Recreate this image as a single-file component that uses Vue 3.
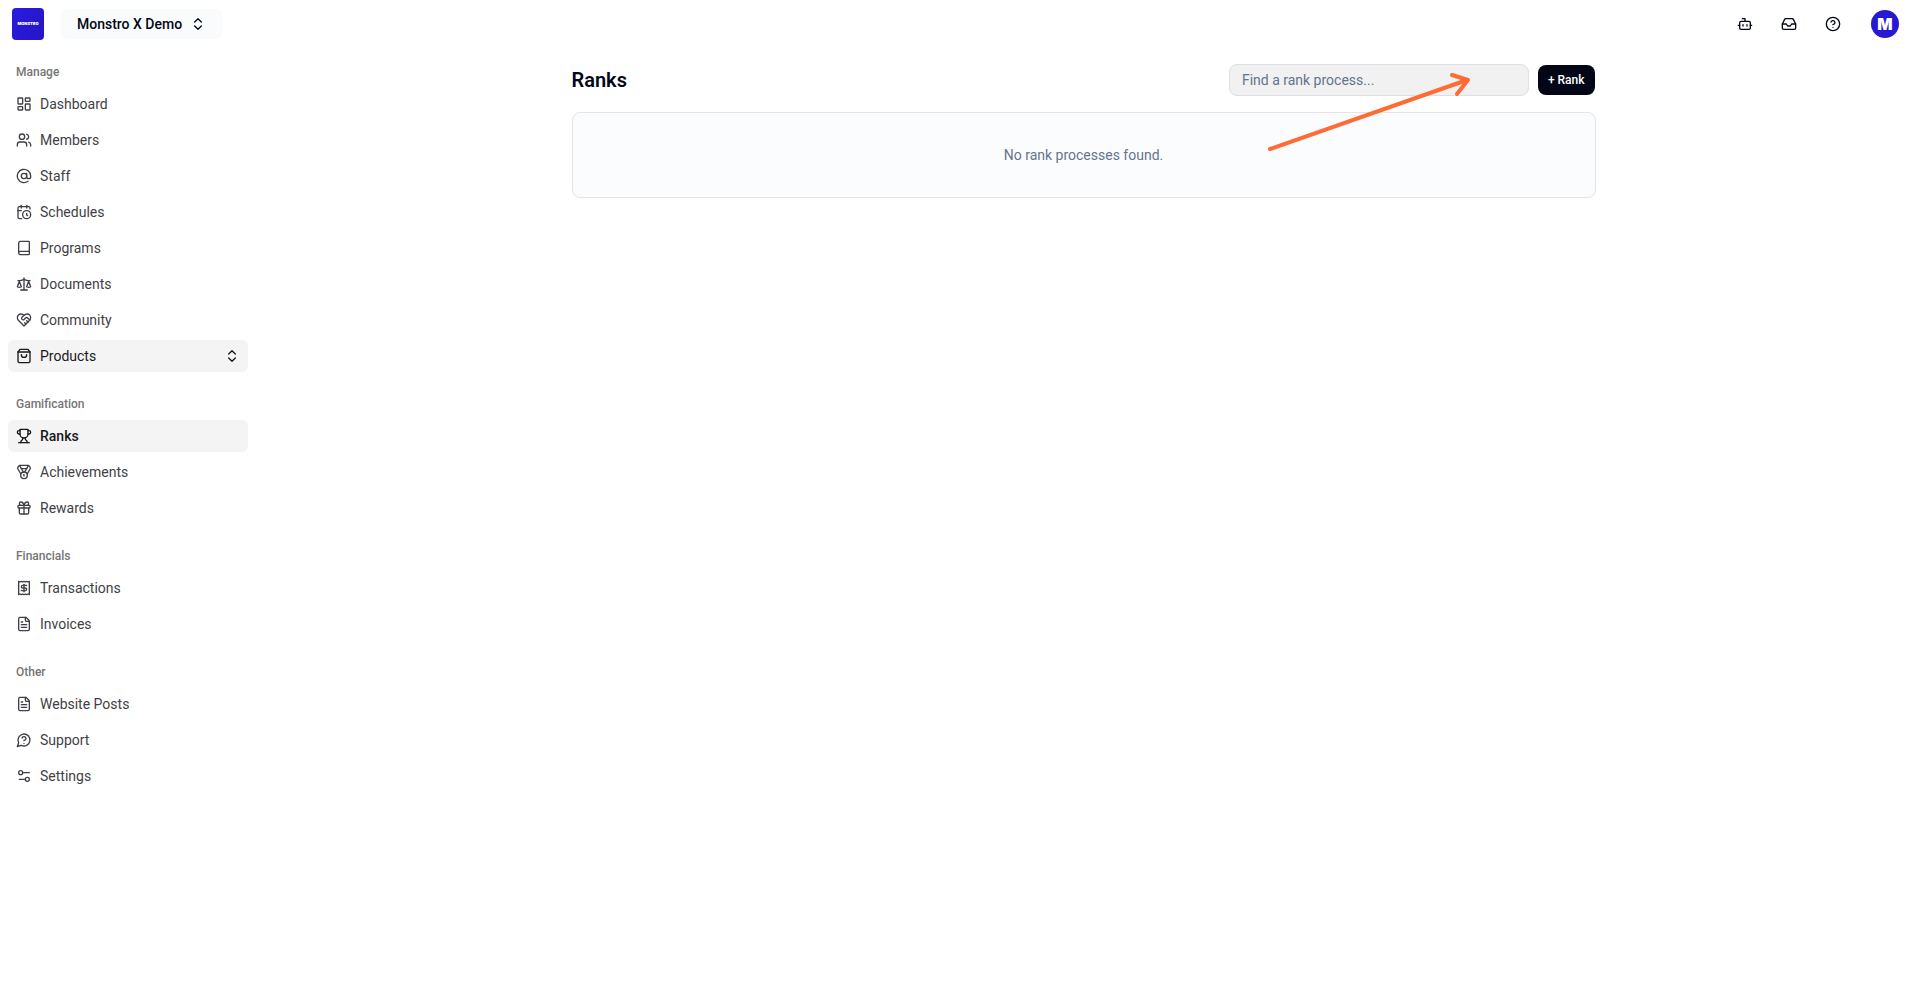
<template>
  <div class="app">
    <header class="topbar">
      <div class="topbar-left">
        <a href="#" class="logo" aria-label="Monstro home"><span>MONSTRO</span></a>
        <button type="button" class="switcher">
          Monstro X Demo
          <svg class="icon" viewBox="0 0 24 24">
            <path v-for="d in icons.chevrons" :key="d" :d="d" />
          </svg>
        </button>
      </div>
      <div class="topbar-right">
        <button v-for="a in actions" :key="a.label" type="button" class="icon-btn" :aria-label="a.label">
          <svg class="icon" viewBox="0 0 24 24">
            <path v-for="d in icons[a.icon]" :key="d" :d="d" />
          </svg>
        </button>
        <button type="button" class="avatar" aria-label="Account">M</button>
      </div>
    </header>

    <div class="body">
      <nav class="sidebar">
        <section v-for="group in groups" :key="group.title" class="group">
          <h2 class="group-title">{{ group.title }}</h2>
          <ul class="menu">
            <li v-for="item in group.items" :key="item.name">
              <a href="#" class="menu-item" :class="{ active: item.active, open: item.expandable }">
                <svg class="icon" viewBox="0 0 24 24">
                  <path v-for="d in icons[item.icon]" :key="d" :d="d" />
                </svg>
                <span class="menu-text">{{ item.name }}</span>
                <svg v-if="item.expandable" class="icon" viewBox="0 0 24 24">
                  <path v-for="d in icons.chevrons" :key="d" :d="d" />
                </svg>
              </a>
            </li>
          </ul>
        </section>
      </nav>

      <main class="main">
        <div class="content">
          <div class="page-head">
            <h1>Ranks</h1>
            <div class="tools">
              <input v-model="keyword" type="text" class="search" placeholder="Find a rank process..." aria-label="Find a rank process">
              <button type="button" class="add-btn">+ Rank</button>
            </div>
          </div>
          <div class="empty">No rank processes found.</div>
          <!-- arrow pointing at the toolbar -->
          <svg class="arrow" viewBox="0 0 208 84" aria-hidden="true">
            <path d="M4 77 201 8M186 3l16 5-11 14" />
          </svg>
        </div>
      </main>
    </div>
  </div>
</template>

<script setup>
import { ref } from 'vue'

const keyword = ref('')

const circle = (x, y, r) => `M${x - r} ${y}a${r} ${r} 0 1 0 ${r * 2} 0a${r} ${r} 0 1 0 ${-r * 2} 0Z`
const box = (x, y, w, h, r) =>
  `M${x + r} ${y}h${w - 2 * r}a${r} ${r} 0 0 1 ${r} ${r}v${h - 2 * r}a${r} ${r} 0 0 1 ${-r} ${r}h${2 * r - w}a${r} ${r} 0 0 1 ${-r} ${-r}v${2 * r - h}a${r} ${r} 0 0 1 ${r} ${-r}Z`

const icons = {
  chevrons: ['m7 15 5 5 5-5', 'm7 9 5-5 5 5'],
  dashboard: [box(3, 3, 7, 9, 1), box(14, 3, 7, 5, 1), box(14, 12, 7, 9, 1), box(3, 16, 7, 5, 1)],
  users: [
    'M16 21v-2a4 4 0 0 0-4-4H6a4 4 0 0 0-4 4v2',
    circle(9, 7, 4),
    'M22 21v-2a4 4 0 0 0-3-3.87',
    'M16 3.13a4 4 0 0 1 0 7.75'
  ],
  at: [circle(12, 12, 4), 'M16 8v5a3 3 0 0 0 6 0v-1a10 10 0 1 0-4 8'],
  calendar: [
    'M21 7.5V6a2 2 0 0 0-2-2H5a2 2 0 0 0-2 2v14a2 2 0 0 0 2 2h3.5',
    'M16 2v4',
    'M8 2v4',
    'M3 10h5',
    'M17.5 17.5 16 16.3V14',
    circle(16, 16, 6)
  ],
  book: ['M4 19.5v-15A2.5 2.5 0 0 1 6.5 2H19a1 1 0 0 1 1 1v18a1 1 0 0 1-1 1H6.5a1 1 0 0 1 0-5H20'],
  scale: [
    'm16 16 3-8 3 8c-.87.65-1.92 1-3 1s-2.13-.35-3-1Z',
    'm2 16 3-8 3 8c-.87.65-1.92 1-3 1s-2.13-.35-3-1Z',
    'M7 21h10',
    'M12 3v18',
    'M3 7h2c2 0 5-1 7-2 2 1 5 2 7 2h2'
  ],
  heart: [
    'M19 14c1.49-1.46 3-3.21 3-5.5A5.5 5.5 0 0 0 16.5 3c-1.76 0-3 .5-4.5 2-1.5-1.5-2.74-2-4.5-2A5.5 5.5 0 0 0 2 8.5c0 2.3 1.5 4.05 3 5.5l7 7Z',
    'M12 5 9.04 7.96a2.17 2.17 0 0 0 0 3.08c.82.82 2.13.85 3 .07l2.07-1.9a2.82 2.82 0 0 1 3.79 0l2.96 2.66',
    'm18 15-2-2',
    'm15 18-2-2'
  ],
  bag: ['M6 2 3 6v14a2 2 0 0 0 2 2h14a2 2 0 0 0 2-2V6l-3-4Z', 'M3 6h18', 'M16 10a4 4 0 0 1-8 0'],
  trophy: [
    'M6 9H4.5a2.5 2.5 0 0 1 0-5H6',
    'M18 9h1.5a2.5 2.5 0 0 0 0-5H18',
    'M4 22h16',
    'M10 14.66V17c0 .55-.47.98-.97 1.21C7.85 18.75 7 20.24 7 22',
    'M14 14.66V17c0 .55.47.98.97 1.21C16.15 18.75 17 20.24 17 22',
    'M18 2H6v7a6 6 0 0 0 12 0V2Z'
  ],
  medal: [
    'M7.21 15 2.66 7.14a2 2 0 0 1 .13-2.2L4.4 2.8A2 2 0 0 1 6 2h12a2 2 0 0 1 1.6.8l1.6 2.14a2 2 0 0 1 .14 2.2L16.79 15',
    'M11 12 5.12 2.2',
    'm13 12 5.88-9.8',
    'M8 7h8',
    circle(12, 17, 5),
    'M12 18v-2h-.5'
  ],
  gift: [
    box(3, 8, 18, 4, 1),
    'M12 8v13',
    'M19 12v7a2 2 0 0 1-2 2H7a2 2 0 0 1-2-2v-7',
    'M7.5 8a2.5 2.5 0 0 1 0-5A4.8 8 0 0 1 12 8a4.8 8 0 0 1 4.5-5 2.5 2.5 0 0 1 0 5'
  ],
  receipt: [
    'M4 2v20l2-1 2 1 2-1 2 1 2-1 2 1 2-1 2 1V2l-2 1-2-1-2 1-2-1-2 1-2-1-2 1Z',
    'M16 8h-6a2 2 0 1 0 0 4h4a2 2 0 1 1 0 4H8',
    'M12 17.5v-11'
  ],
  file: [
    'M15 2H6a2 2 0 0 0-2 2v16a2 2 0 0 0 2 2h12a2 2 0 0 0 2-2V7Z',
    'M14 2v4a2 2 0 0 0 2 2h4',
    'M10 9H8',
    'M16 13H8',
    'M16 17H8'
  ],
  support: ['M7.9 20A9 9 0 1 0 4 16.1L2 22Z', 'M9.09 9a3 3 0 0 1 5.83 1c0 2-3 3-3 3', 'M12 17h.01'],
  settings: ['M20 7h-9', 'M14 17H5', circle(17, 17, 3), circle(7, 7, 3)],
  bot: ['M12 8V4H8', box(4, 8, 16, 12, 2), 'M2 14h2', 'M20 14h2', 'M15 13v2', 'M9 13v2'],
  inbox: [
    'M22 12h-6l-2 3h-4l-2-3H2',
    'M5.45 5.11 2 12v6a2 2 0 0 0 2 2h16a2 2 0 0 0 2-2v-6l-3.45-6.89A2 2 0 0 0 16.76 4H7.24a2 2 0 0 0-1.79 1.11z'
  ],
  help: [circle(12, 12, 10), 'M9.09 9a3 3 0 0 1 5.83 1c0 2-3 3-3 3', 'M12 17h.01']
}

const actions = [
  { label: 'Assistant', icon: 'bot' },
  { label: 'Inbox', icon: 'inbox' },
  { label: 'Help', icon: 'help' }
]

const groups = [
  {
    title: 'Manage',
    items: [
      { name: 'Dashboard', icon: 'dashboard' },
      { name: 'Members', icon: 'users' },
      { name: 'Staff', icon: 'at' },
      { name: 'Schedules', icon: 'calendar' },
      { name: 'Programs', icon: 'book' },
      { name: 'Documents', icon: 'scale' },
      { name: 'Community', icon: 'heart' },
      { name: 'Products', icon: 'bag', expandable: true }
    ]
  },
  {
    title: 'Gamification',
    items: [
      { name: 'Ranks', icon: 'trophy', active: true },
      { name: 'Achievements', icon: 'medal' },
      { name: 'Rewards', icon: 'gift' }
    ]
  },
  {
    title: 'Financials',
    items: [
      { name: 'Transactions', icon: 'receipt' },
      { name: 'Invoices', icon: 'file' }
    ]
  },
  {
    title: 'Other',
    items: [
      { name: 'Website Posts', icon: 'file' },
      { name: 'Support', icon: 'support' },
      { name: 'Settings', icon: 'settings' }
    ]
  }
]
</script>

<style>
body {
  margin: 0;
  background: #fff;
}
</style>

<style scoped>
.app {
  display: flex;
  flex-direction: column;
  min-height: 100vh;
  font-family: Roboto, "Liberation Sans", sans-serif;
  font-size: 14px;
  line-height: 20px;
  color: #020817;
}

.app * {
  box-sizing: border-box;
}

button,
input {
  font: inherit;
  color: inherit;
}

button {
  border: none;
  padding: 0;
  background: none;
  cursor: pointer;
}

a {
  color: inherit;
  text-decoration: none;
}

.icon {
  width: 16px;
  height: 16px;
  flex-shrink: 0;
  fill: none;
  stroke: currentColor;
  stroke-width: 2;
  stroke-linecap: round;
  stroke-linejoin: round;
}

.topbar {
  display: flex;
  align-items: center;
  justify-content: space-between;
  height: 48px;
  padding: 0 12px;
}

.topbar-left {
  display: flex;
  align-items: center;
  gap: 17px;
}

.logo {
  display: flex;
  align-items: center;
  justify-content: center;
  width: 32px;
  height: 32px;
  border-radius: 4px;
  background: linear-gradient(120deg, #2a1be0, #2616c4);
  color: #fff;
  font-family: Inter, sans-serif;
  font-size: 4px;
  font-weight: 900;
  line-height: 8px;
}

.switcher {
  display: flex;
  align-items: center;
  gap: 8px;
  height: 30px;
  padding: 0 16px;
  border-radius: 6px;
  background: #fafbfc;
  font-weight: 500;
}

.topbar-right {
  display: flex;
  align-items: center;
  gap: 8px;
}

.icon-btn {
  display: flex;
  align-items: center;
  justify-content: center;
  width: 36px;
  height: 36px;
}

.avatar {
  width: 28px;
  height: 28px;
  margin-left: 12px;
  border-radius: 50%;
  background: #2619d0;
  color: #fff;
  font-family: Inter, sans-serif;
  font-size: 16px;
  font-weight: 900;
}

.body {
  display: flex;
  flex: 1;
}

.sidebar {
  width: 256px;
  flex-shrink: 0;
}

.group {
  padding: 8px;
}

.group-title {
  margin: 0;
  padding: 0 8px;
  font-size: 12px;
  font-weight: 500;
  line-height: 32px;
  color: #757575;
}

.menu {
  display: flex;
  flex-direction: column;
  gap: 4px;
  margin: 0;
  padding: 0;
  list-style: none;
}

.menu-item {
  display: flex;
  align-items: center;
  gap: 8px;
  height: 32px;
  padding: 0 8px;
  border-radius: 6px;
  color: #3f3f46;
}

.menu-item.open,
.menu-item.active {
  background: #f4f4f5;
  color: #18181b;
}

.menu-item.active {
  font-weight: 500;
}

.menu-text {
  flex: 1;
}

.main {
  flex: 1;
  min-width: 0;
  padding: 16px;
}

.content {
  position: relative;
  max-width: 1024px;
  margin: 0 auto;
}

.page-head {
  display: flex;
  align-items: center;
  justify-content: space-between;
  margin-bottom: 16px;
}

h1 {
  margin: 0;
  font-size: 20px;
  font-weight: 600;
  line-height: 28px;
}

.tools {
  display: flex;
  align-items: center;
  gap: 9px;
  padding-right: 1px;
}

.search {
  width: 300px;
  height: 32px;
  padding: 0 12px;
  border: 1px solid #dcdfe4;
  border-radius: 8px;
  background: #f1f1f1;
  outline: none;
}

.search::placeholder {
  color: #64748b;
  opacity: 1;
}

.add-btn {
  height: 30px;
  padding: 0 10px;
  border-radius: 8px;
  background: #020617;
  color: #fff;
  font-size: 12px;
  font-weight: 500;
}

.empty {
  padding: 32px;
  border: 1px solid #e2e4e8;
  border-radius: 8px;
  background: #fbfcfe;
  color: #64748b;
  text-align: center;
}

.arrow {
  position: absolute;
  top: 8px;
  right: 122px;
  width: 208px;
  height: 84px;
  fill: none;
  stroke: #ff6b35;
  stroke-width: 4;
  stroke-linecap: round;
  stroke-linejoin: round;
  pointer-events: none;
}
</style>
